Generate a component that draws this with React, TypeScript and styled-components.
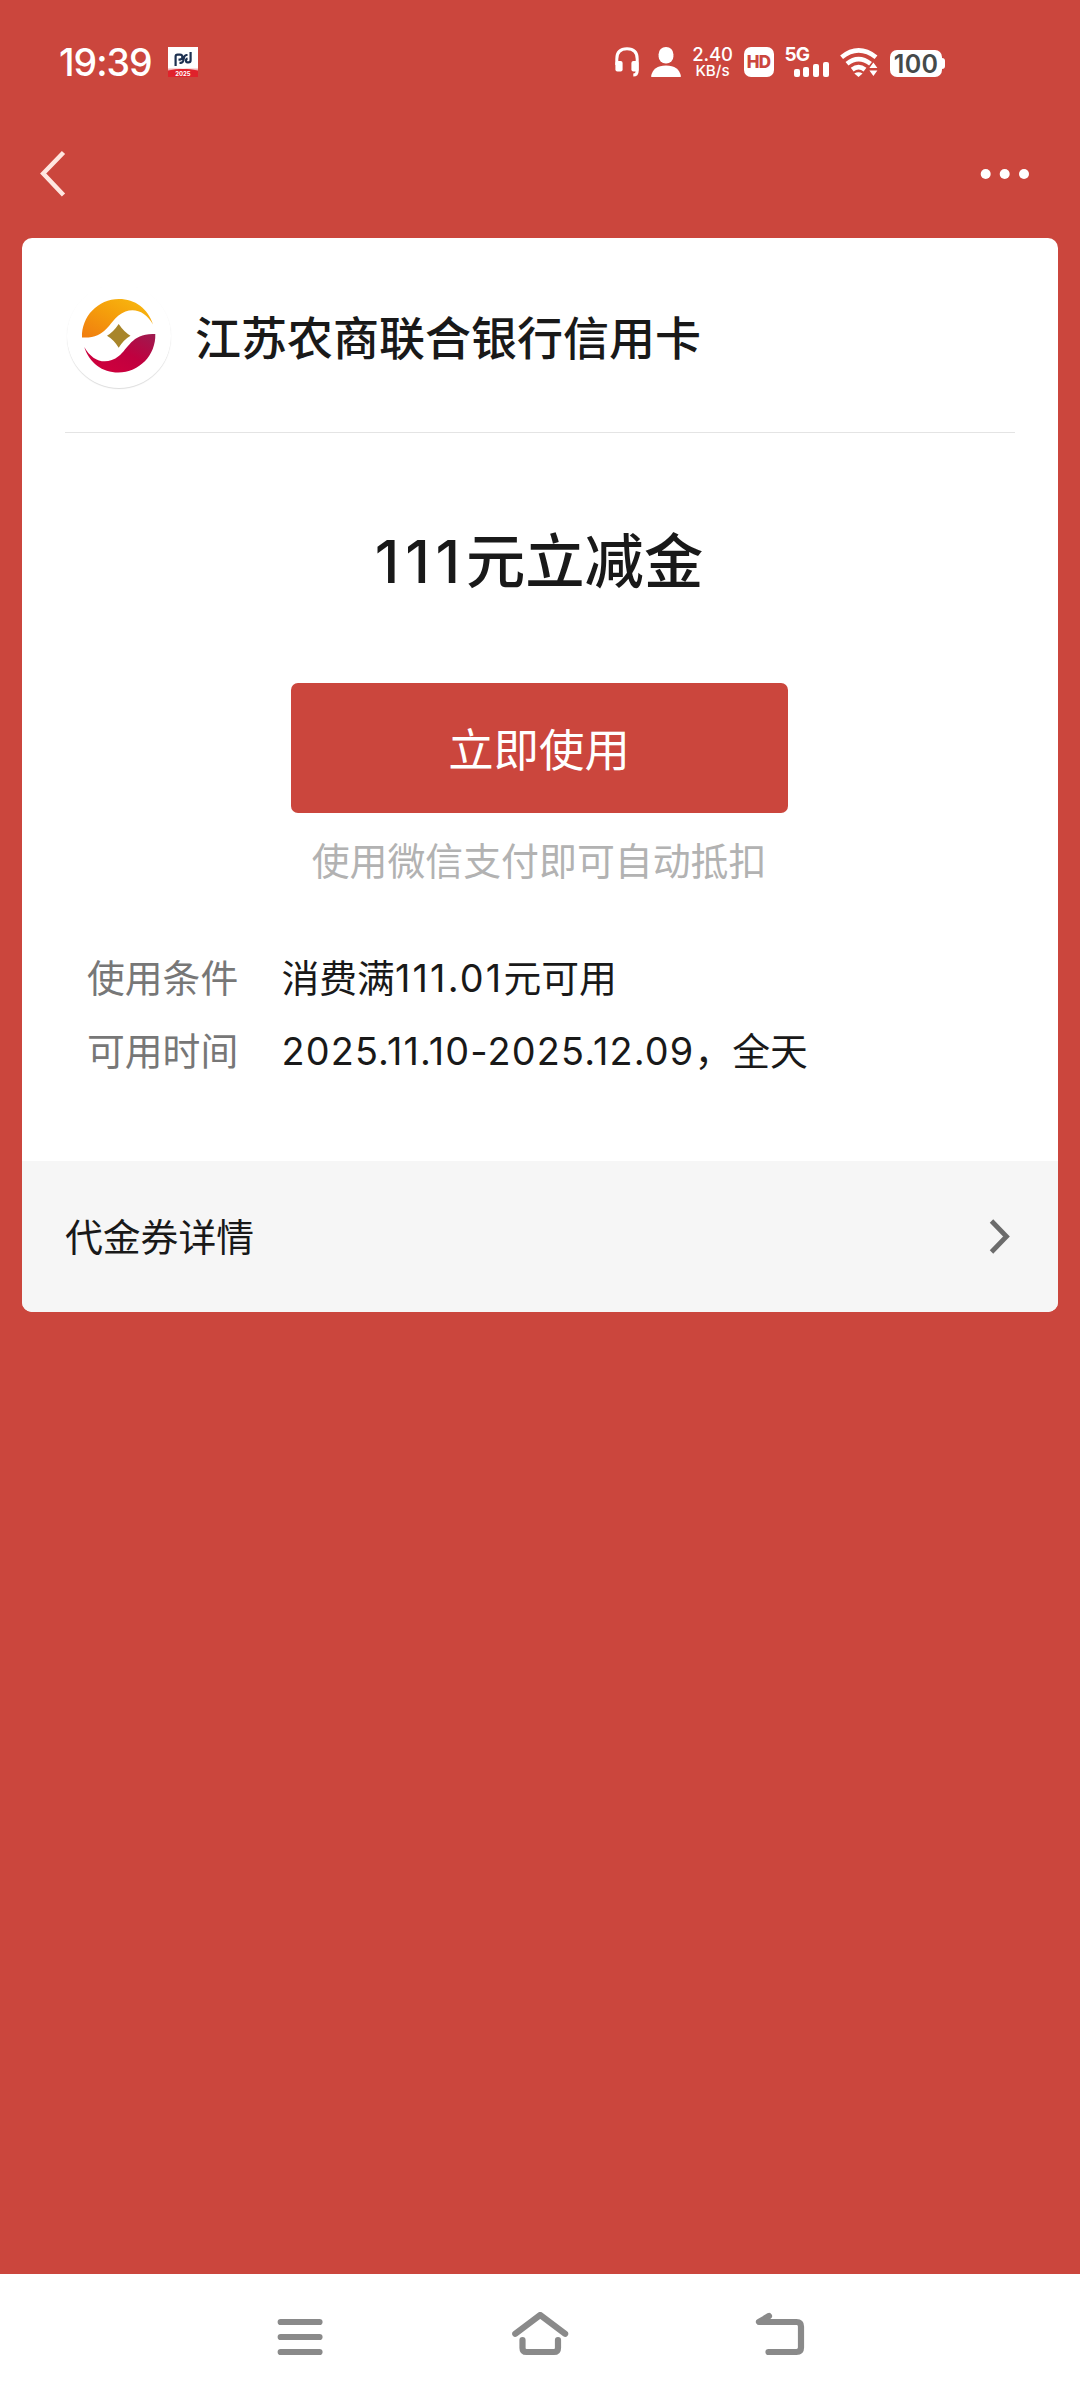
import React from "react";
import styled, { createGlobalStyle } from "styled-components";

const RED = "#cb463d";
const INK = "#191919";

const GlobalStyle = createGlobalStyle`
  * { box-sizing: border-box; }
  body {
    margin: 0;
    background: ${RED};
    font-family: Inter, "Noto Sans CJK SC", sans-serif;
    color: ${INK};
  }
`;

const Screen = styled.div`
  width: 1080px;
  height: 2400px;
  display: flex;
  flex-direction: column;
  background: ${RED};
`;

const StatusBar = styled.header`
  height: 124px;
  padding: 0 135px 0 59px;
  display: flex;
  align-items: center;
  color: #fff;
`;

const Clock = styled.time`
  width: 109px;
  padding-top: 1px;
  font-size: 37.5px;
  line-height: 40px;
  font-weight: 500;
  letter-spacing: -1px;
  white-space: nowrap;
`;

const StatusIcons = styled.div`
  margin-left: auto;
  display: flex;
  align-items: center;
`;

const Glyph = styled.svg<{ $gap?: number }>`
  display: block;
  flex: none;
  margin-left: ${(p) => p.$gap ?? 0}px;
`;

const NetSpeed = styled.div`
  width: 41px;
  margin: 0 10.5px 0 11.5px;
  display: flex;
  flex-direction: column;
  align-items: center;
  font-weight: 500;
  white-space: nowrap;
`;

const SpeedValue = styled.span`
  font-size: 18.5px;
  line-height: 17px;
  letter-spacing: -0.2px;
`;

const SpeedUnit = styled.span`
  font-size: 15.2px;
  line-height: 15px;
`;

const Tag = styled.div`
  width: 30px;
  height: 30px;
  border-radius: 7px;
  display: flex;
  align-items: center;
  justify-content: center;
  background: #fff;
  color: ${RED};
  font-size: 17px;
  font-weight: 800;
  letter-spacing: -0.8px;
`;

const Signal = styled.div`
  width: 46px;
  height: 30px;
  margin-left: 11px;
  display: flex;
  flex-direction: column;
`;

const SignalType = styled.span`
  height: 14px;
  font-size: 19px;
  line-height: 15px;
  font-weight: 700;
  letter-spacing: -1px;
`;

const SignalBars = styled.div`
  height: 16px;
  padding-left: 9px;
  display: flex;
  align-items: flex-end;
  gap: 3.4px;
`;

const Bar = styled.i<{ $h: number }>`
  width: 6.3px;
  height: ${(p) => p.$h}px;
  border-radius: 2px;
  background: #fff;
`;

const Battery = styled.div`
  margin: 3px 0 0 11px;
  display: flex;
  align-items: center;
`;

const BatteryBody = styled.div`
  width: 52px;
  height: 27px;
  border-radius: 7px;
  background: #fff;
  color: #454a4a;
  display: flex;
  align-items: center;
  justify-content: center;
  font-size: 25px;
  font-weight: 600;
  letter-spacing: 0.3px;
`;

const BatteryTip = styled.i`
  width: 3px;
  height: 11px;
  border-radius: 0 3px 3px 0;
  background: #fff;
`;

const TitleBar = styled.nav`
  height: 114px;
  padding: 0 51px 15px 38px;
  display: flex;
  align-items: center;
  justify-content: space-between;
`;

const PlainButton = styled.button`
  border: 0;
  padding: 0;
  background: none;
`;

const Card = styled.main`
  height: 1074px;
  margin: 0 22px;
  border-radius: 10px;
  overflow: hidden;
  background: #fff;
  display: flex;
  flex-direction: column;
`;

const Merchant = styled.section`
  height: 195px;
  margin: 0 43px;
  border-bottom: 1px solid #e4e4e4;
  display: flex;
  align-items: center;
`;

const Avatar = styled.div`
  width: 104px;
  height: 104px;
  margin: 1px 0 0 2px;
  border-radius: 50%;
  box-shadow: 0 1px 1px rgba(0, 0, 0, 0.14);
`;

const MerchantName = styled.h1`
  margin: 5px 0 0 24px;
  font-size: 46px;
  line-height: 60px;
  font-weight: 500;
  white-space: nowrap;
`;

const Offer = styled.section`
  flex: 1;
  padding: 93px 2px 0 0;
  display: flex;
  flex-direction: column;
  align-items: center;
`;

const Amount = styled.h2`
  margin: 0;
  font-size: 59.3px;
  line-height: 72px;
  font-weight: 500;
  white-space: nowrap;
`;

const UseButton = styled.button`
  width: 497px;
  height: 130px;
  margin-top: 85px;
  border: 0;
  border-radius: 7px;
  background: ${RED};
  color: #fff;
  font-family: inherit;
  font-size: 45.4px;
  line-height: 60px;
  padding: 5px 0 0;
`;

const Hint = styled.p`
  margin: 23px 0 0;
  font-size: 37.9px;
  line-height: 50px;
  color: #b2b2b2;
`;

const Terms = styled.dl`
  align-self: stretch;
  margin: 55px 65px 0;
  display: grid;
  grid-template-columns: 194.5px 1fr;
  grid-auto-rows: 73px;
  align-items: center;
  font-size: 37.8px;
  line-height: 50px;
  white-space: nowrap;
`;

const Term = styled.dt`
  color: #777;
`;

const Detail = styled.dd`
  margin: 0;
`;

const Num = styled.span<{ $track: number }>`
  letter-spacing: ${(p) => p.$track}px;
`;

const DetailsLink = styled.footer`
  height: 151px;
  padding: 0 48px 0 43px;
  display: flex;
  align-items: center;
  justify-content: space-between;
  background: #f6f6f6;
  font-size: 37.8px;
  line-height: 50px;
`;

const NavBar = styled.footer`
  height: 126px;
  margin-top: auto;
  padding: 0 180px;
  display: grid;
  grid-template-columns: repeat(3, 1fr);
  justify-items: center;
  align-items: center;
  background: #fff;
`;

const NavIcon = styled.svg`
  display: block;
  fill: none;
  stroke: #8a8a8a;
  stroke-width: 6.2;
  stroke-linecap: round;
  stroke-linejoin: round;
`;

const AppBadge = () => (
  <Glyph width="30" height="30" viewBox="0 0 30 30">
    <rect width="30" height="30" fill="#fff" />
    <rect y="22" width="30" height="8" fill="#e0222b" />
    <path d="M0 23.5Q15 20 30 23.5V21.5H0Z" fill="#f3b3b6" />
    <path
      d="M7.600 19V9.500Q7.600 7.600 9.500 7.600H12Q14.400 7.600 14.400 10T12 12.600H10.500M11.500 15.800H13Q15.300 15.800 15.700 12T18.500 8H19.500M22.600 5V13.200Q22.600 15.400 20.400 15.400H19.500Q18 15.400 18 13.600T19.600 11.600"
      fill="none"
      stroke="#1c3050"
      strokeWidth="2.200"
    />
    <text x="15" y="28.800" fontSize="6" fontWeight="700" fill="#fff" textAnchor="middle">2025</text>
  </Glyph>
);

const Headphones = () => (
  <Glyph width="24" height="30" viewBox="0 0 24 30">
    <path d="M1.8 18V12Q1.8 1.8 12 1.8T22.2 12V24Q22.2 28 18.3 28" fill="none" stroke="#fff" strokeWidth="3" />
    <rect x="0.4" y="14" width="7.2" height="10.5" rx="2" fill="#fff" />
    <rect x="16.4" y="14" width="7.2" height="10.5" rx="2" fill="#fff" />
  </Glyph>
);

const Person = () => (
  <Glyph $gap={12} width="30" height="30" viewBox="0 0 30 30" fill="#fff">
    <rect x="7.6" y="0" width="14.8" height="16.6" rx="7.2" />
    <path d="M0 29.6Q2 18.6 15 18.6T30 29.6Q30 30 29 30H1Q0 30 0 29.6Z" />
  </Glyph>
);

const Wifi = () => (
  <Glyph $gap={9.5} width="39" height="30" viewBox="0 0 39 30">
    <g fill="none" stroke="#fff" strokeWidth="4.6">
      <path d="M1.6 10.2Q18.5 -3.4 36 10.2" />
      <path d="M7 16.8Q18.5 7.4 30.5 16.8" />
      <path d="M12.2 22.600Q18.500 17.600 25 22.600" />
    </g>
    <path d="M14.3 26.600Q18.4 24 22.6 26.600L18.5 30Z" fill="#fff" />
    <path d="M29.4 21L33.4 15.5L37.400 21ZM29.4 23.5H37.400L33.4 29Z" fill="#fff" />
  </Glyph>
);

const BankLogo = () => (
  <Glyph width="104" height="104" viewBox="1 0.5 104 104">
    <defs>
      <linearGradient id="gold" x1="0" y1="1" x2="1" y2="0">
        <stop offset="0" stopColor="#f07c10" />
        <stop offset="0.5" stopColor="#f59e0b" />
        <stop offset="1" stopColor="#f8bd10" />
      </linearGradient>
      <linearGradient id="crimson" x1="0" y1="1" x2="1" y2="0">
        <stop offset="0" stopColor="#d4003c" />
        <stop offset="0.55" stopColor="#c0003f" />
        <stop offset="1" stopColor="#9c1c50" />
      </linearGradient>
    </defs>
    <path
      d="M16 54C15.3 33 32 15.5 53 15.5C69 15.5 82 25 87 41C79 26.5 65 22 52.5 32C43 39.5 39 55.5 16 54Z"
      fill="url(#gold)"
    />
    <path
      d="M89.3 50.5C90 71.5 73.3 89 52.3 89C36.3 89 23.3 79.5 18.3 63.5C26.3 78 40.3 82.5 52.8 72.5C62.3 65 66.3 49 89.3 50.5Z"
      fill="url(#crimson)"
    />
    <path d="M52.7 40.6Q58 48.5 64.5 52.3Q58 56 52.7 64.2Q47.5 56 41 52.3Q47.5 48.5 52.7 40.6Z" fill="#a8852a" />
  </Glyph>
);

export default function App() {
  return (
    <Screen>
      <GlobalStyle />
      <StatusBar>
        <Clock>19:39</Clock>
        <AppBadge />
        <StatusIcons>
          <Headphones />
          <Person />
          <NetSpeed>
            <SpeedValue>2.40</SpeedValue>
            <SpeedUnit>KB/s</SpeedUnit>
          </NetSpeed>
          <Tag>HD</Tag>
          <Signal>
            <SignalType>5G</SignalType>
            <SignalBars>
              <Bar $h={8} />
              <Bar $h={10.5} />
              <Bar $h={13} />
              <Bar $h={15.5} />
            </SignalBars>
          </Signal>
          <Wifi />
          <Battery>
            <BatteryBody>100</BatteryBody>
            <BatteryTip />
          </Battery>
        </StatusIcons>
      </StatusBar>

      <TitleBar>
        <PlainButton aria-label="返回">
          <Glyph width="30" height="50" viewBox="0 0 30 50">
            <path d="M25.5 3.5L5.2 24.5L25.5 46" fill="none" stroke="#ffe6e0" strokeWidth="4.5" />
          </Glyph>
        </PlainButton>
        <PlainButton aria-label="更多">
          <Glyph width="50" height="12" viewBox="0 0 50 12" fill="#fff">
            <circle cx="6.7" cy="6" r="5" />
            <circle cx="25.7" cy="6" r="5" />
            <circle cx="45" cy="6" r="5" />
          </Glyph>
        </PlainButton>
      </TitleBar>

      <Card>
        <Merchant>
          <Avatar>
            <BankLogo />
          </Avatar>
          <MerchantName>江苏农商联合银行信用卡</MerchantName>
        </Merchant>

        <Offer>
          <Amount>
            <Num $track={5.8}>111</Num>元立减金
          </Amount>
          <UseButton>立即使用</UseButton>
          <Hint>使用微信支付即可自动抵扣</Hint>
          <Terms>
            <Term>使用条件</Term>
            <Detail>
              消费满<Num $track={2.2}>111.01</Num>元可用
            </Detail>
            <Term>可用时间</Term>
            <Detail>
              <Num $track={1.17}>2025.11.10-2025.12.09</Num>，全天
            </Detail>
          </Terms>
        </Offer>

        <DetailsLink>
          代金券详情
          <Glyph width="24" height="40" viewBox="0 0 24 40">
            <path d="M5.5 4L20.5 19.500L5.5 35" fill="none" stroke="#6c6c6c" strokeWidth="4.8" />
          </Glyph>
        </DetailsLink>
      </Card>

      <NavBar>
        <NavIcon width="60" height="50" viewBox="0 0 60 50">
          <path d="M10.7 10H49.5M10.7 25H49.5M10.7 40H49.5" />
        </NavIcon>
        <NavIcon width="64" height="50" viewBox="0 0 64 50">
          <path d="M7.3 21.8L32.2 3L57.1 21.8M14.5 28V36Q14.5 40 18.5 40H46Q50 40 50 36V28" />
        </NavIcon>
        <NavIcon width="60" height="50" viewBox="0 0 60 50">
          <path d="M19 4L9 10H46.5Q51 10 51 14.5V35.5Q51 40 46.5 40H18.5" />
        </NavIcon>
      </NavBar>
    </Screen>
  );
}
